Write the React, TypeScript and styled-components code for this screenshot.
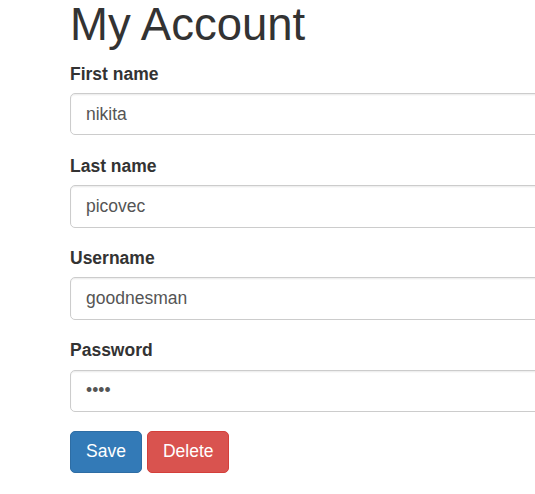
import React from "react";
import styled, { createGlobalStyle } from "styled-components";

const Global = createGlobalStyle`
  html, body { margin: 0; padding: 0; overflow: hidden; background: #fff; }
  body {
    font-family: "Liberation Sans", Arial, Helvetica, sans-serif;
    font-size: 17.5px;
    line-height: 1.42857;
    color: #333;
  }
  * { box-sizing: border-box; }
`;

const Page = styled.div`
  padding: 0 0 0 70px;
  width: 700px;
`;

const Title = styled.h1`
  margin: 0 0 12px;
  font-size: 45.5px;
  font-weight: 500;
  line-height: 49.5px;
  color: #333;
`;

const Form = styled.form`
  display: flex;
  flex-direction: column;
`;

const Group = styled.div`
  margin-bottom: 18.5px;
`;

const Label = styled.label`
  display: block;
  margin-bottom: 6.25px;
  font-weight: 700;
  font-size: 17.5px;
  line-height: 25px;
`;

const Input = styled.input`
  display: block;
  width: 100%;
  height: 42.5px;
  padding: 7.5px 15px;
  font-family: inherit;
  font-size: 17.5px;
  line-height: 1.42857;
  color: #555;
  background: #fff;
  border: 1.25px solid #ccc;
  border-radius: 5px;
  box-shadow: inset 0 1.25px 1.25px rgba(0, 0, 0, 0.075);
  outline: none;
`;

const Actions = styled.div`
  display: flex;
  gap: 5px;
`;

const Button = styled.button<{ $variant: "primary" | "danger" }>`
  height: 42px;
  padding: 7.5px 15px;
  font-family: inherit;
  font-size: 17.5px;
  line-height: 1.42857;
  color: #fff;
  border-radius: 5px;
  border: 1.25px solid ${(p) => (p.$variant === "primary" ? "#2e6da4" : "#d43f3a")};
  background: ${(p) => (p.$variant === "primary" ? "#337ab7" : "#d9534f")};
  cursor: pointer;
`;

const fields = [
  { label: "First name", value: "nikita", type: "text" },
  { label: "Last name", value: "picovec", type: "text" },
  { label: "Username", value: "goodnesman", type: "text" },
  { label: "Password", value: "1234", type: "password" },
];

export default function App() {
  return (
    <>
      <Global />
      <Page>
        <Title>My Account</Title>
        <Form onSubmit={(e) => e.preventDefault()}>
          {fields.map((f) => (
            <Group key={f.label}>
              <Label>{f.label}</Label>
              <Input type={f.type} defaultValue={f.value} />
            </Group>
          ))}
          <Actions>
            <Button $variant="primary" type="submit">Save</Button>
            <Button $variant="danger" type="button">Delete</Button>
          </Actions>
        </Form>
      </Page>
    </>
  );
}
